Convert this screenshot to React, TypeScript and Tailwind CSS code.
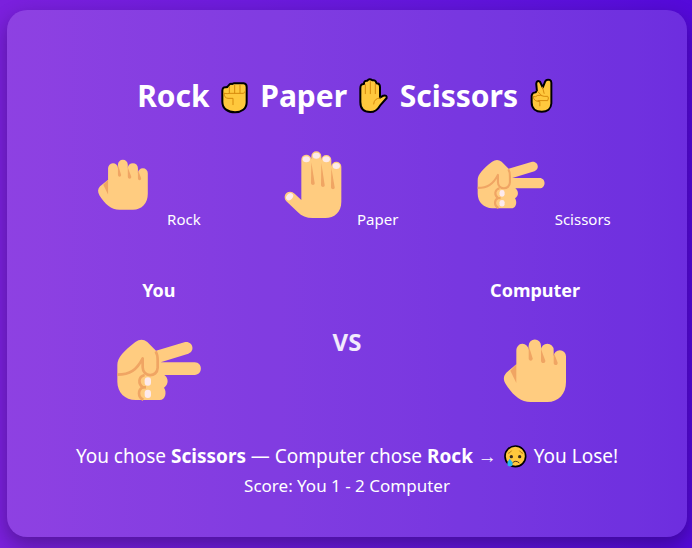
import type { ReactNode } from "react";

const SKIN = "#ffcc80";
const SHADE = "#f0a563";
const NAIL = "#fdeaec";

type IconProps = { className?: string };

function RockHand({ className }: IconProps) {
  return (
    <svg viewBox="0 138 300 300" className={className} aria-hidden="true">
      <path
        fill={SKIN}
        d="M94 268V226a18.500 18.500 0 0 1 37-2V212a18.500 18.500 0 0 1 37 0V225a19 19 0 0 1 38 0V244a18.500 18.500 0 0 1 37 0V321C243 357 221 381 187 381H137C105 381 82 358 62 327C54 314 55 303 64 293Z"
      />
      <g fill={SHADE}>
        <path d="M94 268L76 287L94 324Z" />
        <path d="M131 212L143 250C144 259 131 260 131 250Z" />
        <path d="M168 222L181 257C182 266 168 267 168 257Z" />
        <path d="M206 232L218 263C219 272 206 273 206 263Z" />
      </g>
    </svg>
  );
}

function PaperHand({ className }: IconProps) {
  return (
    <svg viewBox="-18 0 240 240" className={className} aria-hidden="true">
      <path
        fill={SKIN}
        d="M67 165V45a15 15 0 0 1 30-2V34a15 15 0 0 1 30 0V45a15 15 0 0 1 30 0V65a15 15 0 0 1 30 0V170C187 201 166 219 139 219H101C82 219 68 213 56 201L22 169C11 155 20 140 33 140C39 140 43 142 47 146Z"
      />
      <g fill={SHADE}>
        <path d="M97 52L107 114C108 122 96 122 96 114Z" />
        <path d="M127 54L137 120C138 128 126 128 126 120Z" />
        <path d="M157 68L167 127C168 135 156 135 156 127Z" />
      </g>
      <g fill={NAIL}>
        <ellipse cx="82" cy="43" rx="11" ry="9" />
        <ellipse cx="112" cy="32" rx="11" ry="9" />
        <ellipse cx="142" cy="43" rx="11" ry="9" />
        <ellipse cx="172" cy="63" rx="11" ry="9" />
        <ellipse cx="32" cy="155" rx="12" ry="9" transform="rotate(-48 32 155)" />
      </g>
    </svg>
  );
}

function ScissorsHand({ className }: IconProps) {
  return (
    <svg viewBox="-3 138 300 300" className={className} aria-hidden="true">
      <path
        fill={SKIN}
        d="M22 270C22 248 42 228 76 201Q95 187 112 201L138 227L223 202C248 196 257 229 235 236L152 262H254C279 262 279 300 254 300H163C176 309 177 328 162 338C171 350 167 375 149 375H77C45 375 22 352 22 320Z"
      />
      <g fill="none" stroke={SHADE} strokeWidth="8" strokeLinejoin="round">
        <path d="M22 299C60 299 80 285 98 250V277C98 307 142 309 143 278V256C143 246 142 237 137 229" />
        <path d="M104 300C85 305 83 326 99 337C83 344 83 367 100 374" />
        <path d="M99 337H108" />
      </g>
      <g fill={NAIL}>
        <rect x="104" y="307" width="19" height="25" rx="9" />
        <rect x="104" y="344" width="19" height="25" rx="9" />
      </g>
    </svg>
  );
}

function FistEmoji() {
  return (
    <svg viewBox="278 38 81 96" className="mx-1 inline-block h-8 w-[27px] align-[-7px]" aria-hidden="true">
      <path
        d="M302 47Q305 42 311 44L316 42H346Q355 43 355 53V99C355 119 339 129 320 129C299 129 282 118 282 97V64Q283 52 293 54Q298 54 302 47Z"
        fill="#ffc83d"
        stroke="#000"
        strokeWidth="6"
        strokeLinejoin="round"
      />
      <g fill="none" stroke="#d6890c" strokeWidth="3" strokeLinecap="round">
        <path d="M303 52V71M319 48V71M335 48V71M287 72Q297 74 305 72H344Q351 72 351 65" />
        <path d="M287 72Q287 86 299 87H314V106" />
      </g>
    </svg>
  );
}

function PalmEmoji() {
  return (
    <svg viewBox="45 26 87 108" className="mx-1 inline-block h-9 w-[29px] align-[-7px]" aria-hidden="true">
      <path
        d="M49 57Q49 43 60 44Q59 33 70 34Q76 26 85 33Q96 31 97 42Q108 42 108 53V85L118 79Q129 76 128 86L108 109C101 121 93 128 79 128C59 128 49 116 49 98Z"
        fill="#ffc83d"
        stroke="#000"
        strokeWidth="6"
        strokeLinejoin="round"
      />
      <g fill="none" stroke="#d6890c" strokeWidth="3" strokeLinecap="round">
        <path d="M64 46V73M79 37V73M94 43V73M108 86Q90 87 89 104" />
      </g>
    </svg>
  );
}

function VictoryEmoji() {
  return (
    <svg viewBox="556 26 70 108" className="mx-1 inline-block h-9 w-[23px] align-[-7px]" aria-hidden="true">
      <path
        d="M573 69L577 64L575 43Q576 31 586 36L595 54L602 36Q606 28 616 31Q622 34 621 43V103C620 119 608 128 592 128C574 128 561 118 561 100V79Q563 69 573 69Z"
        fill="#ffc83d"
        stroke="#000"
        strokeWidth="6"
        strokeLinejoin="round"
      />
      <g fill="none" stroke="#d6890c" strokeWidth="3" strokeLinecap="round">
        <path d="M594 53L599 72M578 65L590 77M566 82Q574 84 580 78Q588 77 599 81H610Q614 85 610 94H580M566 84Q568 97 586 97V110" />
      </g>
    </svg>
  );
}

function CryEmoji() {
  return (
    <svg viewBox="458 29 69 69" className="mx-[2px] inline-block size-[23px] align-[-5px]" aria-hidden="true">
      <circle cx="492" cy="63" r="31" fill="#ffc83d" stroke="#000" strokeWidth="5" />
      <circle cx="480" cy="64" r="5" fill="#3a2a1c" />
      <circle cx="505" cy="64" r="5" fill="#3a2a1c" />
      <g fill="none" stroke="#4a3420" strokeWidth="3" strokeLinecap="round">
        <path d="M484 82Q493 73 503 82" />
        <path d="M471 54Q477 53 480 47M505 47Q509 53 514 54" stroke="#b97a18" />
      </g>
      <path d="M475 70Q484 79 484 85A8 8 0 0 1 468 85Q468 79 475 70Z" fill="#27b8f0" />
    </svg>
  );
}

function Choice({ label, children }: { label: string; children: ReactNode }) {
  return (
    <button type="button" className="cursor-pointer text-[15px] leading-6 whitespace-nowrap">
      {children} {label}
    </button>
  );
}

function Player({ name, children }: { name: string; children: ReactNode }) {
  return (
    <section className="flex w-[100px] flex-col items-center">
      <h2 className="mb-[19px] text-lg leading-6 font-bold">{name}</h2>
      {children}
    </section>
  );
}

export default function App() {
  return (
    <div className="min-h-screen bg-linear-to-r from-[#7b20dd] to-[#5409da] pt-[10px] pr-[5px] pb-[11px] pl-[7px] font-['Noto_Sans','Open_Sans',sans-serif] text-white">
      <main className="rounded-[20px] bg-white/15 px-10 pt-16 pb-9 shadow-[0_8px_20px_rgba(0,0,0,0.3)]">
        <h1 className="text-center text-[30px] leading-[44px] font-bold whitespace-nowrap">
          Rock <FistEmoji /> Paper <PalmEmoji /> Scissors <VictoryEmoji />
        </h1>

        <div className="mt-[27px] flex items-end justify-around">
          <Choice label="Rock">
            <RockHand className="inline-block size-20 align-baseline" />
          </Choice>
          <Choice label="Paper">
            <PaperHand className="inline-block size-20 align-baseline" />
          </Choice>
          <Choice label="Scissors">
            <ScissorsHand className="inline-block size-20 align-baseline" />
          </Choice>
        </div>

        <div className="mt-[47px] flex items-center justify-around">
          <Player name="You">
            <ScissorsHand className="size-[100px]" />
          </Player>
          <p className="pb-[16px] text-2xl leading-8 font-bold text-white/90">VS</p>
          <Player name="Computer">
            <RockHand className="size-[100px]" />
          </Player>
        </div>

        <div className="mt-5 text-center whitespace-nowrap">
          <p className="text-[19px] leading-[30px]">
            You chose <strong>Scissors</strong> — Computer chose <strong>Rock</strong> → <CryEmoji /> You Lose!
          </p>
          <p className="text-[17px] leading-[30px]">Score: You 1 - 2 Computer</p>
        </div>
      </main>
    </div>
  );
}
